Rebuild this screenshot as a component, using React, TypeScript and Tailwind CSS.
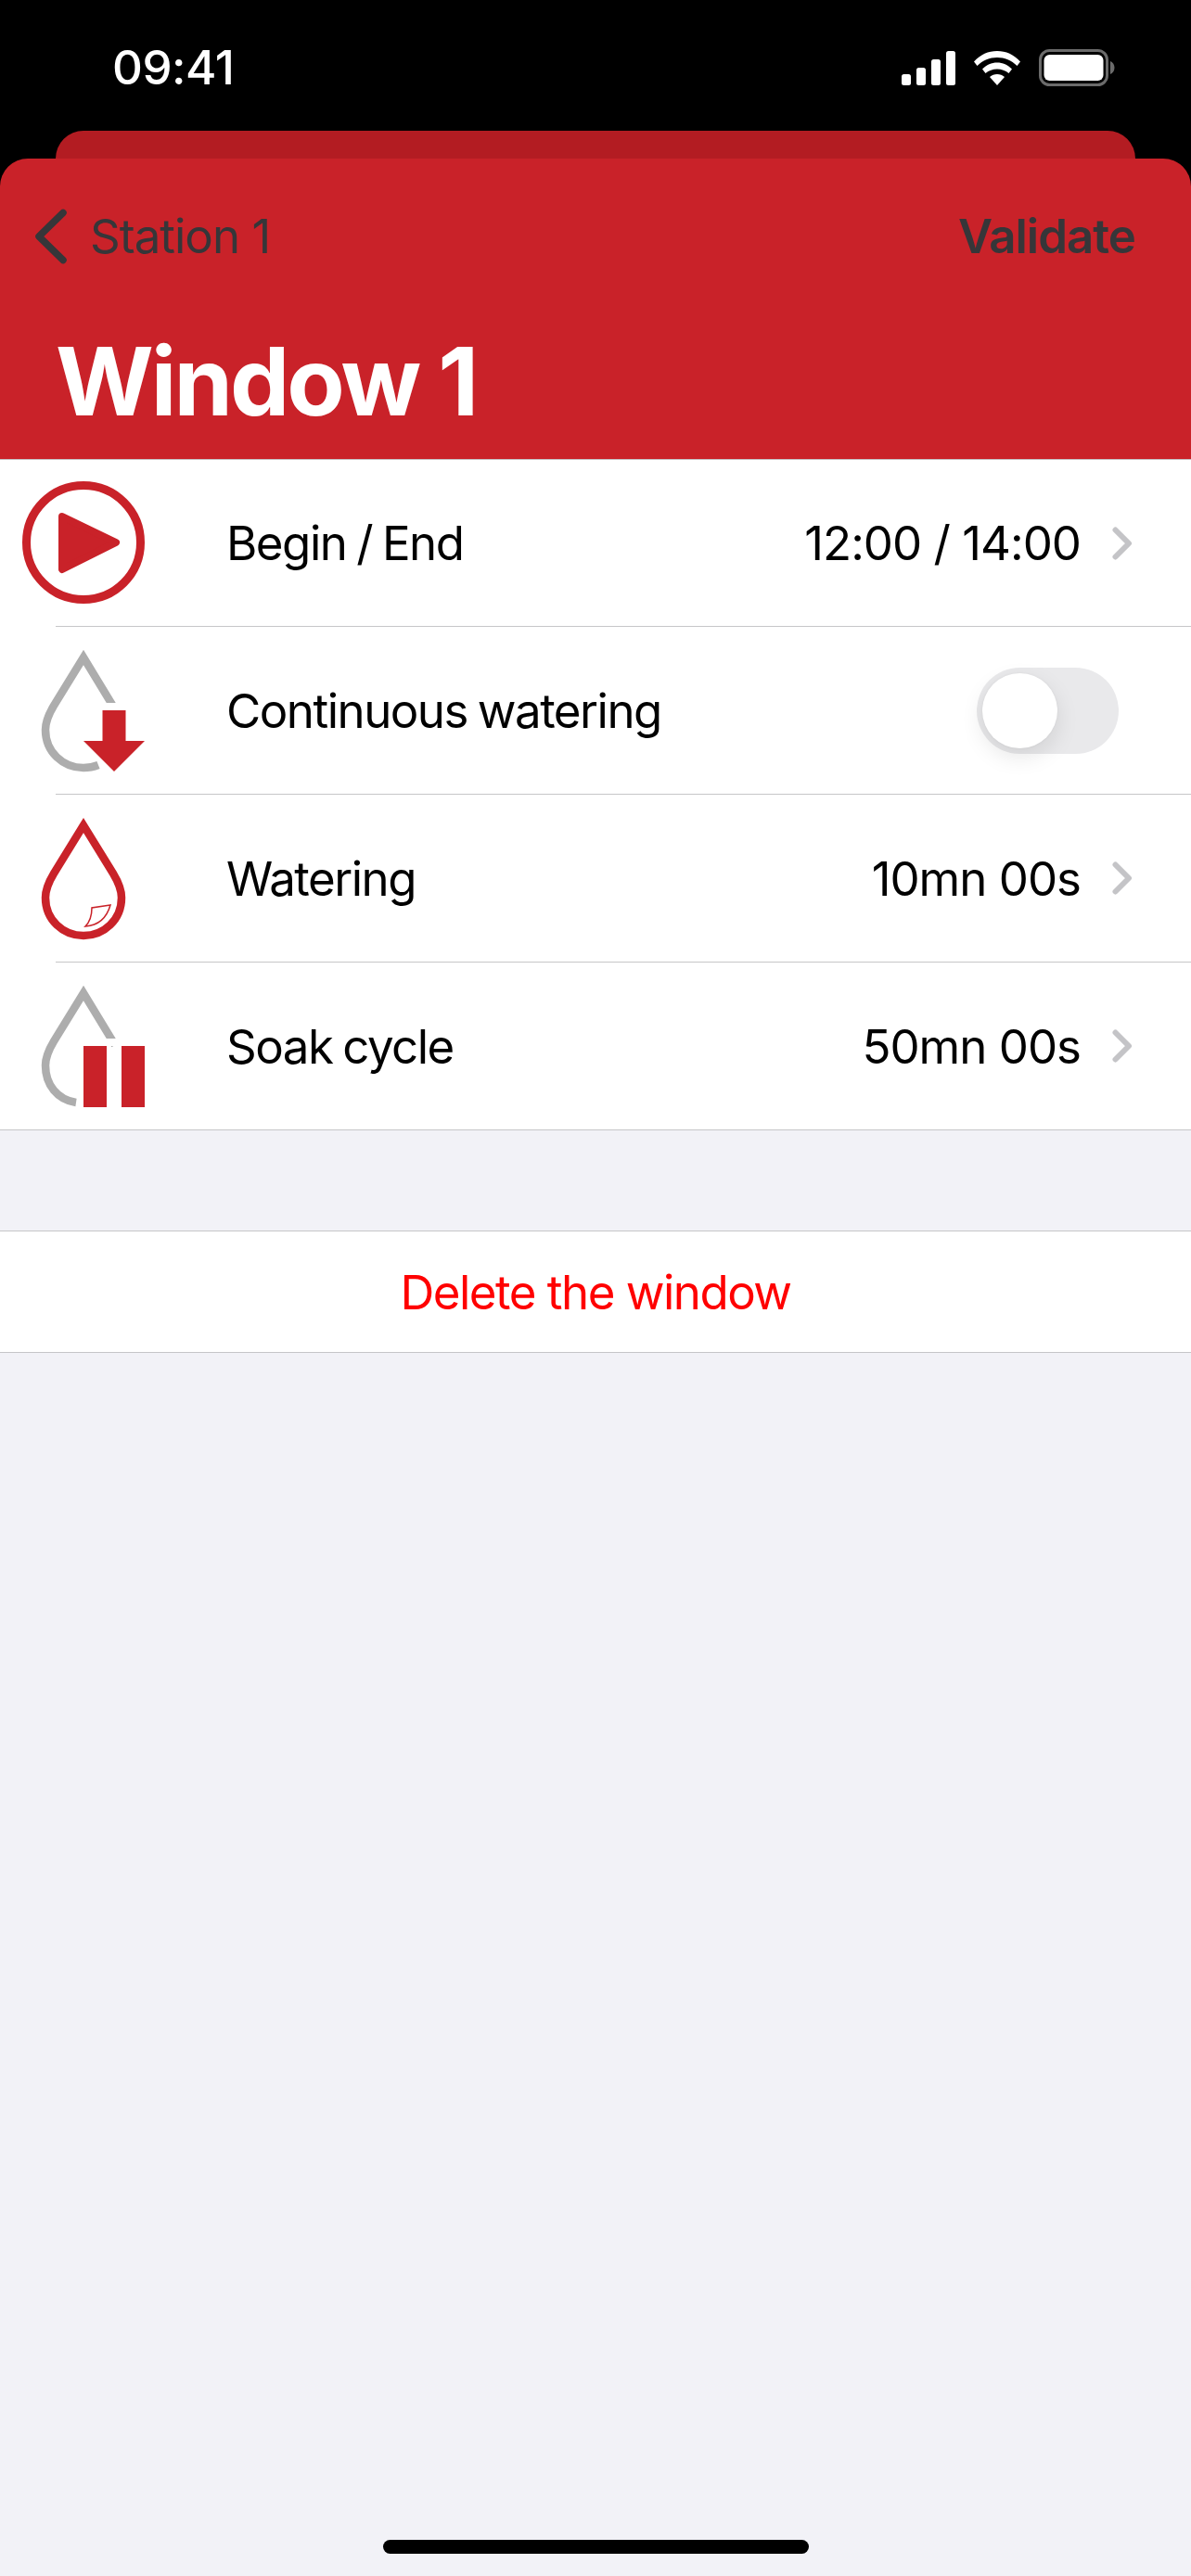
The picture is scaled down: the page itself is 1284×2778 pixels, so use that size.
import React from 'react';

const RED = '#c92229';
const GRAY = '#adadad';

const SignalIcon = () => (
  <svg width="58" height="37" viewBox="0 0 58 37" fill="#fff">
    <rect x="0" y="25" width="10" height="12" rx="2.5" />
    <rect x="16" y="18" width="10" height="19" rx="2.5" />
    <rect x="32" y="9" width="10" height="28" rx="2.5" />
    <rect x="48" y="0" width="10" height="37" rx="2.5" />
  </svg>
);

const WifiIcon = () => (
  <svg width="50" height="37" viewBox="0 0 50 37" fill="#fff">
    <path d="M25 0C34.5 0 43 3.8 50 11.5L46.5 16C40.5 10 33 7 25 7S9.5 10 3.5 16L0 11.5C7 3.8 15.5 0 25 0Z" />
    <path d="M25 12.5C31 12.5 36.5 15 41 19.5L37.5 24C34 21 29.7 19.5 25 19.5S16 21 12.5 24L9 19.5C13.5 15 19 12.5 25 12.5Z" />
    <path d="M25 25C28 25 30.8 26 33 28L25 37L17 28C19.2 26 22 25 25 25Z" />
  </svg>
);

const BatteryIcon = () => (
  <svg width="82" height="40" viewBox="0 0 82 40">
    <rect x="1.5" y="1.5" width="72" height="37" rx="10" fill="none" stroke="#6b6b6b" strokeWidth="3" />
    <rect x="5.5" y="6" width="64" height="28" rx="6" fill="#fff" />
    <path d="M77 13C79.5 14 81.5 16.5 81.5 20S79.5 26 77 27Z" fill="#6b6b6b" />
  </svg>
);

const BeginIcon = () => (
  <svg width="170" height="180" viewBox="0 0 170 180">
    <circle cx="90" cy="89" r="61.5" fill="none" stroke={RED} strokeWidth="9" />
    <path d="M67 61L125 89L67 118Z" fill={RED} stroke={RED} strokeWidth="8" strokeLinejoin="round" />
  </svg>
);

const ContinuousIcon = () => (
  <svg width="170" height="180" viewBox="0 0 170 180">
    <path
      d="M124 89L90 33L58 85C52 95 49 103 49 111C49 135 68 152 90 152C96 152 101 151 106 149"
      fill="none"
      stroke={GRAY}
      strokeWidth="8.5"
      strokeMiterlimit="10"
    />
    <rect x="108" y="82" width="30" height="9" fill="#fff" />
    <path d="M110.5 90H135.5V123H156L123 156L90 123H110.5Z" fill={RED} />
  </svg>
);

const WateringIcon = () => (
  <svg width="170" height="180" viewBox="0 0 170 180">
    <path
      d="M90 33L58 85C52 95 49 103 49 111C49 135 68 152 90 152C112 152 131 135 131 111C131 103 128 95 122 85Z"
      fill="none"
      stroke={RED}
      strokeWidth="8.5"
      strokeMiterlimit="10"
    />
    <path
      d="M119 119L99 122C99 130 97 137 92 142C106 141 115 133 119 119Z"
      fill="none"
      stroke={RED}
      strokeWidth="1.5"
    />
  </svg>
);

const SoakIcon = () => (
  <svg width="170" height="180" viewBox="0 0 170 180">
    <path
      d="M124 89L90 33L58 85C52 95 49 103 49 111C49 132 62 148 82 151"
      fill="none"
      stroke={GRAY}
      strokeWidth="8.5"
      strokeMiterlimit="10"
    />
    <rect x="108" y="82" width="30" height="8" fill="#fff" />
    <rect x="90" y="90" width="25" height="66" fill={RED} />
    <rect x="131" y="90" width="25" height="66" fill={RED} />
  </svg>
);

const Chevron = () => (
  <svg width="22" height="36" viewBox="0 0 22 36" className="ml-[34px]">
    <path d="M3.5 3.5L18 18L3.5 32.5" fill="none" stroke="#c4c4c7" strokeWidth="6" strokeLinecap="round" strokeLinejoin="round" />
  </svg>
);

const Row = ({ icon, label, value, height }: { icon: React.ReactNode; label: string; value?: string; height: string }) => (
  <div className={`flex items-center bg-white ${height}`}>
    <div className="w-[170px] shrink-0">{icon}</div>
    <span className="ml-[74px] flex-1 pt-[2px] [word-spacing:-2px]">{label}</span>
    {value ? (
      <div className="flex items-center pr-[63px]">
        <span className="pt-[2px] tracking-[-1px]">{value}</span>
        <Chevron />
      </div>
    ) : (
      <div className="mr-[78px] h-[93px] w-[153px] rounded-full bg-[#e9e9eb] p-[6px]">
        <div className="h-[81px] w-[81px] rounded-full bg-white shadow-[0_9px_24px_rgba(0,0,0,0.1),0_0_3px_rgba(0,0,0,0.05)]" />
      </div>
    )}
  </div>
);

const Divider = () => (
  <div className="bg-white pl-[60px]">
    <div className="h-px bg-[#c6c6c8]" />
  </div>
);

export default function App() {
  return (
    <div className="flex min-h-[2778px] flex-col bg-[#f2f2f7] text-[51px] tracking-[-1.5px] text-black font-['Inter','Noto_Sans',sans-serif]">
      <div className="h-[141px] bg-black">
        <div className="flex items-center justify-between pl-[121px] pr-[82px] pt-[52px]">
          <span className="text-[51px] leading-[42px] font-medium tracking-[-0.5px] text-white">09:41</span>
          <div className="flex items-center gap-[20px]">
            <SignalIcon />
            <WifiIcon />
            <BatteryIcon />
          </div>
        </div>
      </div>

      <div className="bg-black px-[60px]">
        <div className="h-[30px] rounded-t-[30px] bg-[#b31c22]" />
      </div>

      <div className="bg-black">
        <div className="h-[324px] rounded-t-[30px] bg-[#c92229] pl-[37px] pr-[60px] pt-[46px]">
          <div className="flex items-center justify-between text-[#363639]">
            <div className="flex items-center">
              <svg width="36" height="60" viewBox="0 0 36 60">
                <path d="M31 4.5L5 30L31 55.5" fill="none" stroke="#363639" strokeWidth="7.5" strokeLinecap="round" strokeLinejoin="round" />
              </svg>
              <span className="ml-[24px] tracking-[-1px]">Station 1</span>
            </div>
            <span className="font-semibold tracking-[-1px]">Validate</span>
          </div>
          <h1 className="mt-[55px] pl-[23px] text-[102px] leading-[124px] font-bold tracking-[-3px] text-white">Window 1</h1>
        </div>
      </div>
      <div className="h-px bg-[#c6c6c8]" />

      <Row icon={<BeginIcon />} label="Begin / End" value="12:00 / 14:00" height="h-[179px]" />
      <Divider />
      <Row icon={<ContinuousIcon />} label="Continuous watering" height="h-[180px]" />
      <Divider />
      <Row icon={<WateringIcon />} label="Watering" value="10mn 00s" height="h-[180px]" />
      <Divider />
      <Row icon={<SoakIcon />} label="Soak cycle" value="50mn 00s" height="h-[180px]" />
      <div className="h-px bg-[#c6c6c8]" />

      <div className="mt-[108px] flex h-[132px] items-center justify-center border-y border-[#c6c6c8] bg-white pt-[2px] text-[#ff0000]">
        Delete the window
      </div>

      <div className="mt-auto flex justify-center pb-[24px]">
        <div className="h-[15px] w-[459px] rounded-full bg-black" />
      </div>
    </div>
  );
}
